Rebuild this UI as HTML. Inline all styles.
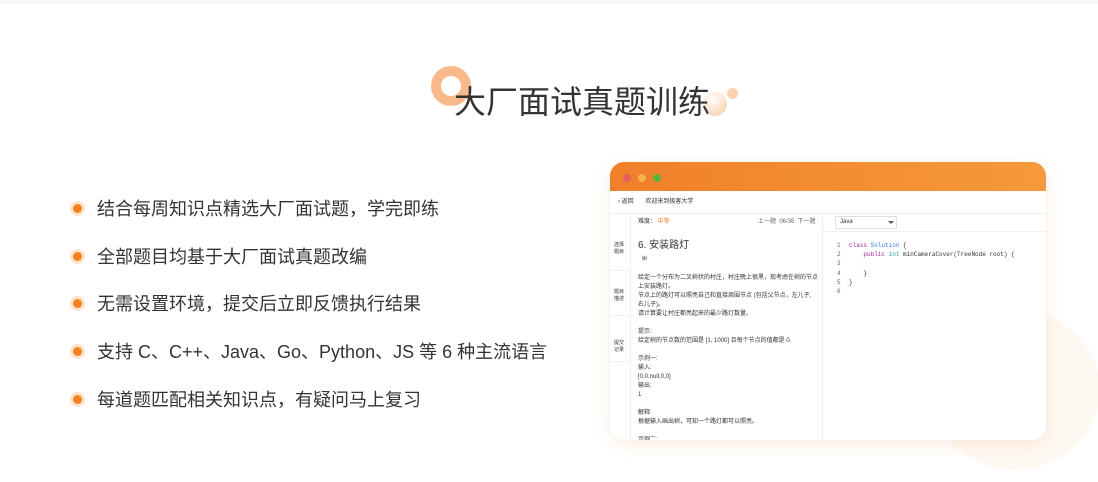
<!DOCTYPE html><html><head><meta charset="utf-8"><style>
*{margin:0;padding:0;box-sizing:border-box}
body{width:1098px;height:482px;background:#fff;position:relative;overflow:hidden;font-family:"Liberation Sans","Noto Sans CJK SC",sans-serif;color:#333}
.a{position:absolute}
.li{position:absolute;left:97px;font-size:18px;color:#333;line-height:24px}
.dot{position:absolute;left:73px;width:9px;height:9px;border-radius:50%;background:#f5821f;box-shadow:0 0 0 3px #fde3cc}
.s{font-size:6px;line-height:9px;color:#333}
</style></head><body>
<div class="a" style="left:0;top:0;width:1098px;height:4px;background:#f7f7f7"></div>
<div class="a" style="left:431px;top:66px;width:40px;height:40px;border-radius:50%;border:10px solid #f9b98a"></div>
<div class="a" style="left:703px;top:92px;width:24px;height:24px;border-radius:50%;background:radial-gradient(circle at 40% 30%,#fff,#fbc89f)"></div>
<div class="a" style="left:727px;top:88px;width:11px;height:11px;border-radius:50%;background:#fcd2b0"></div>
<div class="a" style="left:454px;top:82px;font-size:32px;line-height:40px;color:#333;white-space:nowrap">大厂面试真题训练</div>
<div class="a" style="left:930px;top:310px;width:170px;height:160px;border-radius:50%;background:#fef8f3"></div>
<div class="dot" style="top:204px"></div><div class="li" style="top:197px">结合每周知识点精选大厂面试题，学完即练</div>
<div class="dot" style="top:252px"></div><div class="li" style="top:245px">全部题目均基于大厂面试真题改编</div>
<div class="dot" style="top:299px"></div><div class="li" style="top:292px">无需设置环境，提交后立即反馈执行结果</div>
<div class="dot" style="top:347px"></div><div class="li" style="top:340px">支持 C、C++、Java、Go、Python、JS 等 6 种主流语言</div>
<div class="dot" style="top:395px"></div><div class="li" style="top:388px">每道题匹配相关知识点，有疑问马上复习</div>
<div class="a" style="left:610px;top:162px;width:436px;height:278px;border-radius:14px;background:#fff;box-shadow:0 4px 16px rgba(240,150,90,.18);overflow:hidden">
 <div class="a" style="left:0;top:0;width:436px;height:29px;background:linear-gradient(90deg,#f07f2a,#f59a3a)"></div>
 <div class="a" style="left:13px;top:12px;width:8px;height:8px;border-radius:50%;background:#ea5d5d"></div>
 <div class="a" style="left:28px;top:12px;width:8px;height:8px;border-radius:50%;background:#f8b24a"></div>
 <div class="a" style="left:43px;top:12px;width:8px;height:8px;border-radius:50%;background:#5cb43c"></div>
 <div class="a s" style="left:8px;top:36px">‹ 返回 &nbsp; &nbsp; &nbsp; 欢迎来到极客大学</div>
 <div class="a" style="left:0;top:51px;width:436px;height:1px;background:#eee"></div>
 <div class="a" style="left:20px;top:52px;width:1px;height:226px;background:#eee"></div>
 <div class="a" style="left:212px;top:52px;width:1px;height:226px;background:#eee"></div>
 <div class="a" style="left:0;top:108px;width:20px;height:1px;background:#eee"></div>
 <div class="a" style="left:0;top:153px;width:20px;height:1px;background:#eee"></div>
 <div class="a" style="left:0;top:199px;width:20px;height:1px;background:#eee"></div>
 <div class="a s" style="left:4px;top:80px;font-size:5px;line-height:7px">选择<br>题目</div>
 <div class="a s" style="left:4px;top:127px;font-size:5px;line-height:7px">题目<br>描述</div>
 <div class="a s" style="left:4px;top:178px;font-size:5px;line-height:7px">提交<br>记录</div>
 <div class="a s" style="left:28px;top:56px">难度： <span style="color:#f5821f">中等</span></div>
 <div class="a s" style="left:148px;top:56px;color:#666">上一题 &nbsp;06/36 &nbsp;下一题</div>
 <div class="a" style="left:28px;top:74px;font-size:10px;color:#333">6. 安装路灯</div>
 <div class="a s" style="left:32px;top:93px;font-size:5px">树</div>
 <div class="a s" style="left:28px;top:112px">给定一个分布为二叉树状的村庄，村庄晚上很黑，现考虑在树的节点<br>上安装路灯。<br>节点上的路灯可以照亮自己和直接周围节点 (包括父节点，左儿子,<br>右儿子)。<br>请计算要让村庄都亮起来的最少路灯数量。<br><br>提示:<br>给定树的节点数的范围是 [1, 1000] 且每个节点的值都是 0.<br><br>示例一:<br>输入:<br>[0,0,null,0,0]<br>输出:<br>1<br><br>解释:<br>根据输入画出树，可知一个路灯都可以照亮。<br><br>示例二:</div>
 <div class="a" style="left:225px;top:54px;width:62px;height:13px;border:1px solid #ddd;border-radius:2px"></div>
 <div class="a s" style="left:230px;top:56px">Java</div>
 <div class="a" style="left:278px;top:59px;border:3px solid transparent;border-top:3px solid #555"></div>
 <div class="a" style="left:213px;top:69px;width:223px;height:1px;background:#f0f0f0"></div>
 <div class="a s" style="left:227px;top:79px;font-family:'Liberation Mono',monospace;line-height:9.2px;color:#666">1<br>2<br>3<br>4<br>5<br>6</div>
 <div class="a s" style="left:239px;top:79px;font-family:'Liberation Mono',monospace;line-height:9.2px;white-space:pre"><span style="color:#a626a4">class</span> <span style="color:#4078f2">Solution</span> {
    <span style="color:#a626a4">public</span> <span style="color:#2aa198">int</span> minCameraCover(TreeNode root) {

    }
}</div>
</div>
</body></html>
